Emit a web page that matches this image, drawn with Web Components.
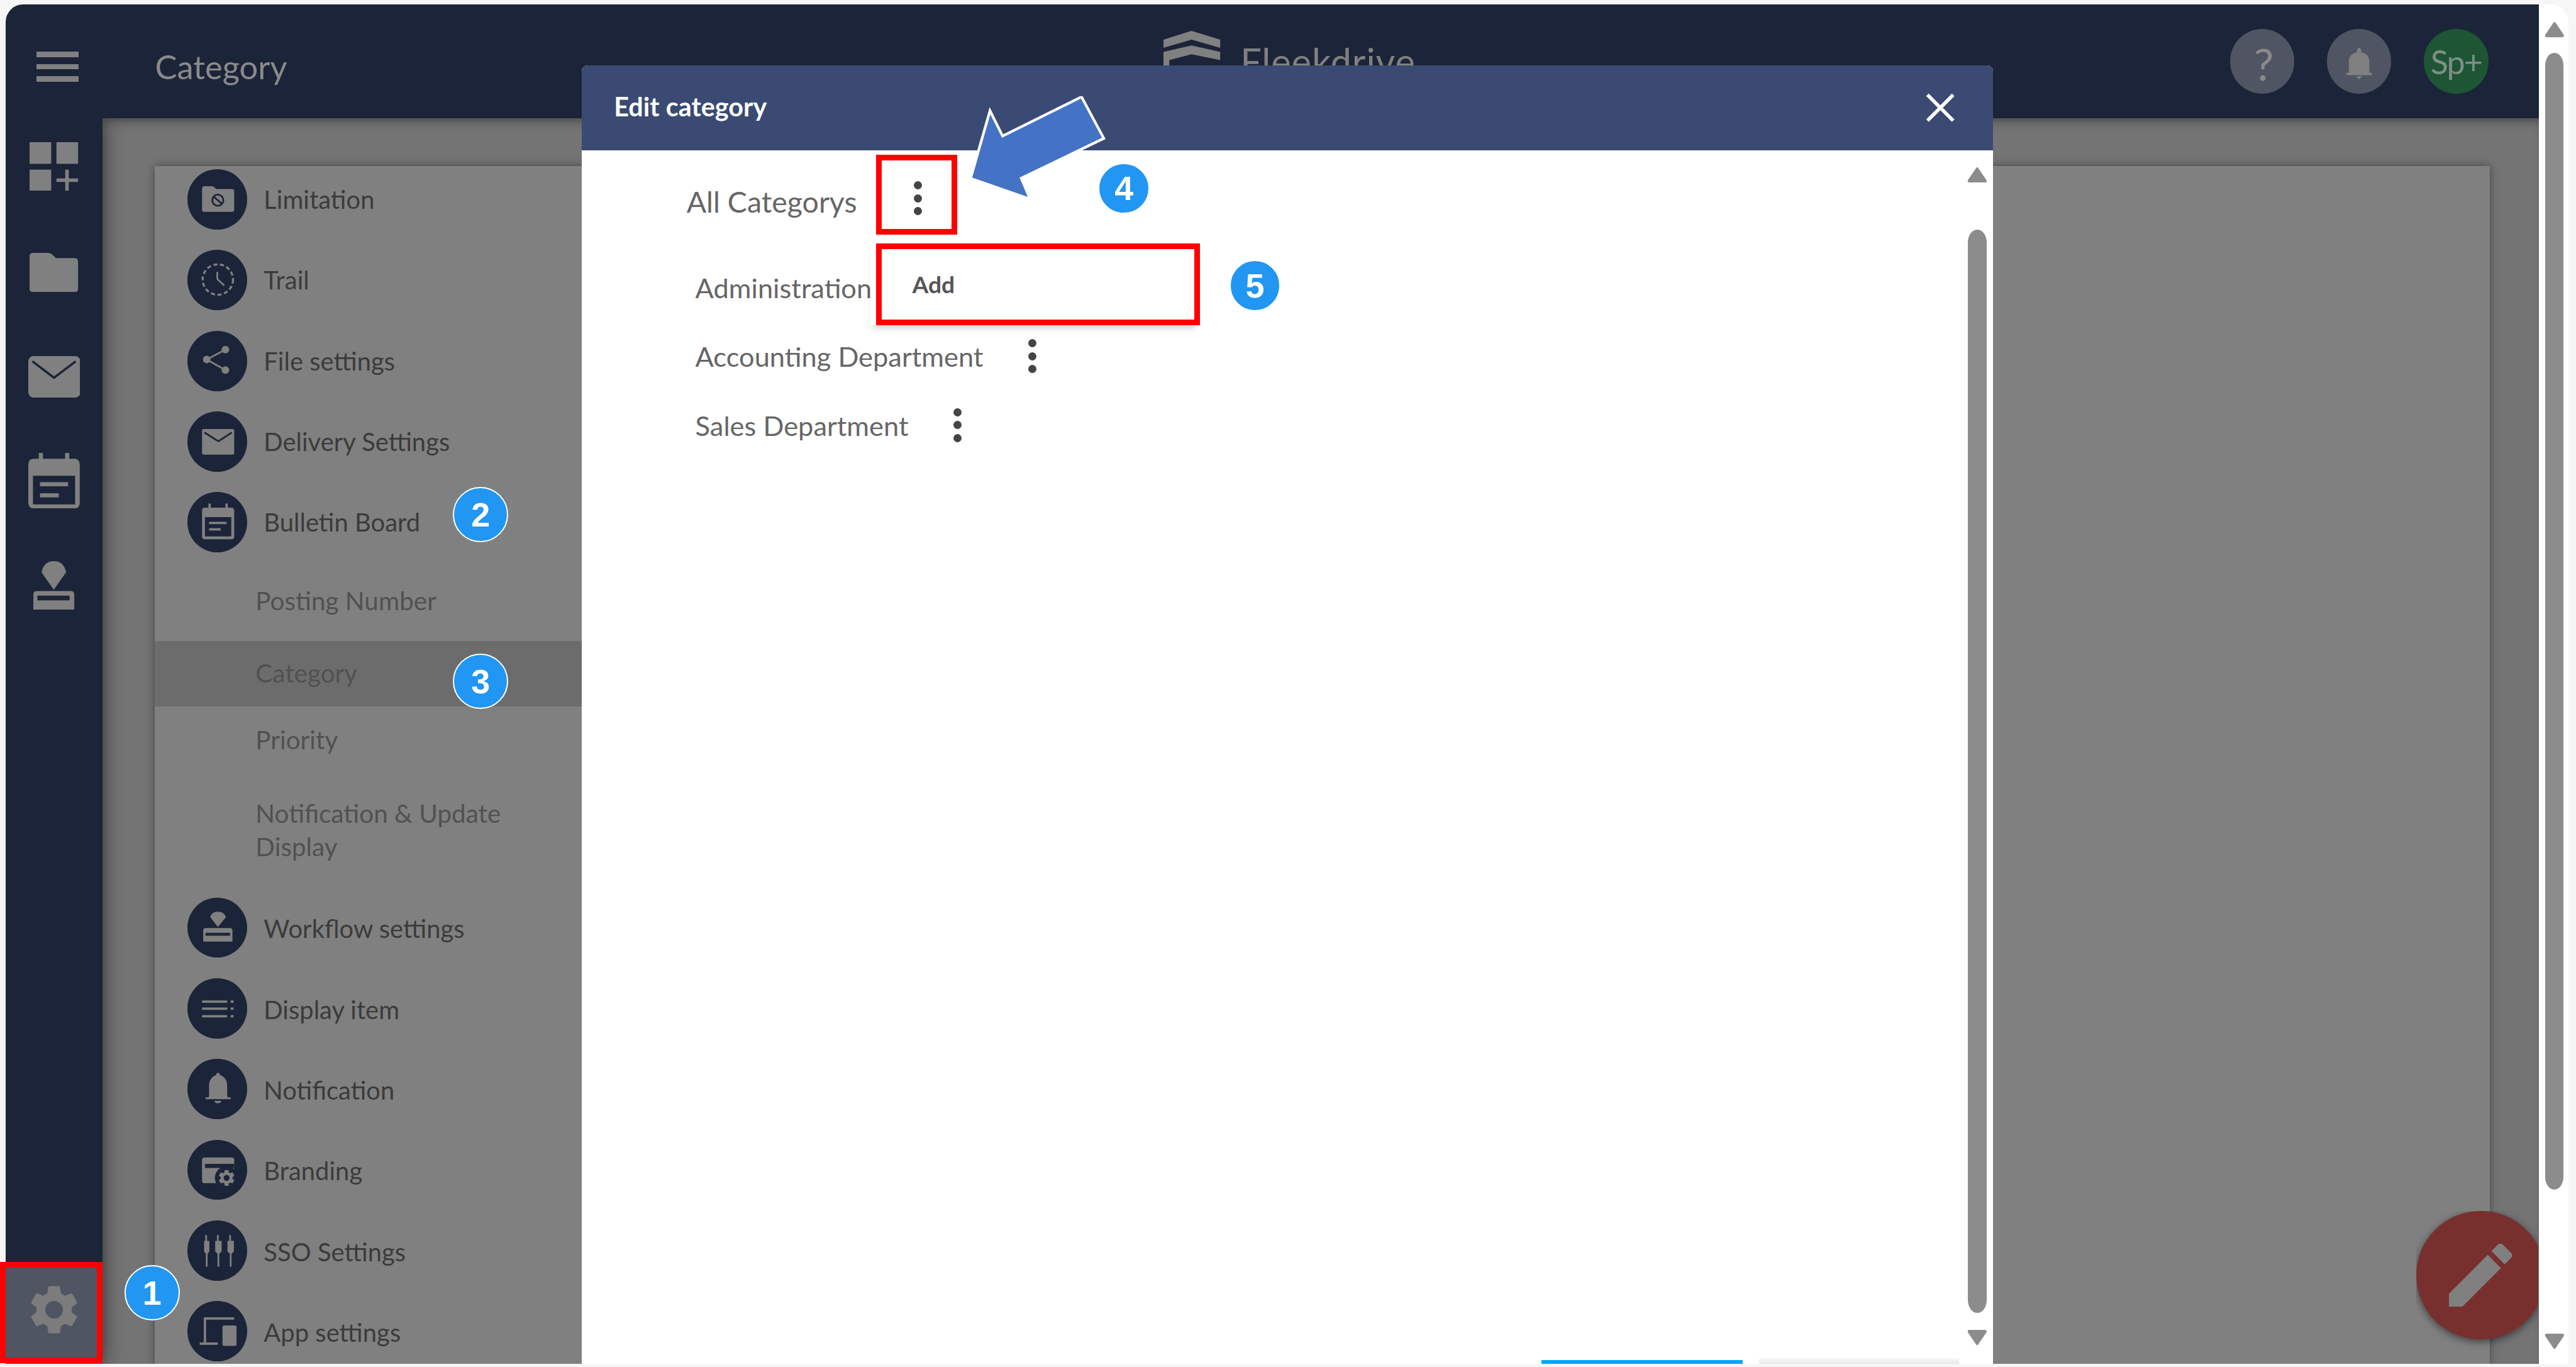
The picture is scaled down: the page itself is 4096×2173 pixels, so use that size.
<!DOCTYPE html>
<html lang="en">
<head>
<meta charset="utf-8">
<title>Category</title>
<style>
  html { overflow: hidden; background: #f6f6f6; }
  body { margin: 0; font-family: Lato, "Liberation Sans", sans-serif; }
</style>
</head>
<body>
<fd-app>
  <fd-topbar slot="top"></fd-topbar>
  <fd-rail slot="rail"></fd-rail>
  <fd-settings-menu slot="main">
    <fd-menu-item icon="limit">Limitation</fd-menu-item>
    <fd-menu-item icon="clock">Trail</fd-menu-item>
    <fd-menu-item icon="share">File settings</fd-menu-item>
    <fd-menu-item icon="mail">Delivery Settings</fd-menu-item>
    <fd-menu-item icon="board">Bulletin Board</fd-menu-item>
    <fd-sub-item h="134">Posting Number</fd-sub-item>
    <fd-sub-item h="112" selected>Category</fd-sub-item>
    <fd-sub-item h="116">Priority</fd-sub-item>
    <fd-sub-item h="193">Notification &amp; Update Display</fd-sub-item>
    <fd-menu-item icon="stamp" low>Workflow settings</fd-menu-item>
    <fd-menu-item icon="list" low>Display item</fd-menu-item>
    <fd-menu-item icon="bell" low>Notification</fd-menu-item>
    <fd-menu-item icon="brand" low>Branding</fd-menu-item>
    <fd-menu-item icon="sso" low>SSO Settings</fd-menu-item>
    <fd-menu-item icon="app" low>App settings</fd-menu-item>
  </fd-settings-menu>
  <fd-scrollbar slot="scroll" top="30" w="32" first="26" thumb="1944" last="246"></fd-scrollbar>

  <fd-edit-dialog>
    <fd-tree-row root>All Categorys</fd-tree-row>
    <fd-tree-row>Administration</fd-tree-row>
    <fd-tree-row>Accounting Department</fd-tree-row>
    <fd-tree-row>Sales Department</fd-tree-row>
  </fd-edit-dialog>
  <fd-fab></fd-fab>

  <fd-mark x="0" y="2157" w="175" h="173"></fd-mark>
  <fd-mark x="1498" y="265" w="139" h="136"></fd-mark>
  <fd-mark x="1498" y="416" w="554" h="140"></fd-mark>
  <fd-arrow x="1660" y="165"></fd-arrow>
  <fd-callout x="260" y="2210">1</fd-callout>
  <fd-callout x="822" y="880">2</fd-callout>
  <fd-callout x="822" y="1165">3</fd-callout>
  <fd-callout x="1922" y="322" small>4</fd-callout>
  <fd-callout x="2146" y="488" small>5</fd-callout>
</fd-app>

<script>
const GRAY = '#808080';
const NAVY = '#1b2438';

// sizes below are the reference's pixels; every "px" goes through this on its way to the page
const SCALE = 4096 / 4405;
const sized = markup => markup.replace(/(-?\d*\.?\d+)px/g, (m, n) => (n * SCALE).toFixed(2) + 'px');

const GEAR = 'M19.14 12.94c.04-.3.06-.61.06-.94 0-.32-.02-.64-.07-.94l2.03-1.58c.18-.14.23-.41.12-.61l-1.92-3.32c-.12-.22-.37-.29-.59-.22l-2.39.96c-.5-.38-1.03-.7-1.62-.94l-.36-2.54c-.04-.24-.24-.41-.48-.41h-3.84c-.24 0-.43.17-.47.41l-.36 2.54c-.59.24-1.13.57-1.62.94l-2.39-.96c-.22-.08-.47 0-.59.22L2.74 8.87c-.12.21-.08.47.12.61l2.03 1.58c-.05.3-.09.63-.09.94s.02.64.07.94l-2.03 1.58c-.18.14-.23.41-.12.61l1.92 3.32c.12.22.37.29.59.22l2.39-.96c.5.38 1.03.7 1.62.94l.36 2.54c.05.24.24.41.48.41h3.84c.24 0 .44-.17.47-.41l.36-2.54c.59-.24 1.13-.56 1.62-.94l2.39.96c.22.08.47 0 .59-.22l1.92-3.32c.12-.22.07-.47-.12-.61l-2.01-1.58zM12 15.6c-1.98 0-3.6-1.62-3.6-3.6s1.62-3.6 3.6-3.6 3.6 1.62 3.6 3.6-1.62 3.6-3.6 3.6z';

// menu icons, all drawn in a 103 x 103 box
const MENU_ICONS = {
  limit: `<path fill="${GRAY}" d="M25 33q0-4 4-4h13q2 0 4 2l3 3h27q4 0 4 4v31q0 4-4 4H29q-4 0-4-4z"/>
    <circle cx="52" cy="53" r="9.500" fill="none" stroke="${NAVY}" stroke-width="3"/>
    <path stroke="${NAVY}" stroke-width="3" d="M45 47l14 12"/>`,
  clock: `<circle cx="52" cy="51" r="26" fill="none" stroke="${GRAY}" stroke-width="3.5" stroke-dasharray="7 4.4"/>
    <path fill="none" stroke="${GRAY}" stroke-width="3" d="M51 38v10q0 2 2 4l10 9"/>`,
  share: `<g fill="${GRAY}"><circle cx="65" cy="32" r="6.5"/><circle cx="33" cy="49" r="6.5"/><circle cx="65" cy="67" r="6.5"/></g>
    <path fill="none" stroke="${GRAY}" stroke-width="3" d="M65 32L33 49l32 18"/>`,
  mail: `<rect x="25" y="30" width="55" height="44" rx="3" fill="${GRAY}"/>
    <path fill="none" stroke="${NAVY}" stroke-width="3" d="M29 36l24 15 23-15"/>`,
  board: `<path fill="${GRAY}" d="M36 20h4v7h25v-7h4v7h6q5 0 5 5v44q0 5-5 5H30q-5 0-5-5V32q0-5 5-5h6z"/>
    <rect x="30" y="43" width="45" height="33" fill="${NAVY}"/>
    <rect x="37" y="51" width="30" height="4" fill="${GRAY}"/><rect x="37" y="62" width="20" height="4" fill="${GRAY}"/>`,
  stamp: `<path fill="${GRAY}" d="M39 33q3-9 13-9t14 9L52 50z"/>
    <path fill="${GRAY}" d="M31 52h42q4 0 4 4v19H27V56q0-4 4-4z"/>
    <rect x="31" y="60" width="42" height="5" fill="${NAVY}"/>`,
  list: `<g fill="${GRAY}"><rect x="25" y="38" width="43" height="4"/><rect x="25" y="50" width="43" height="4"/><rect x="25" y="63" width="43" height="4"/>
    <rect x="74" y="38" width="5" height="4"/><rect x="74" y="50" width="5" height="4"/><rect x="74" y="63" width="5" height="4"/></g>`,
  bell: `<path fill="${GRAY}" d="M52 24q3 0 4 4c7 2 12 9 12 18v18q0 2 2 2h4v3H31v-3h4q2 0 2-2V46c0-9 5-16 12-18q1-4 3-4z"/>
    <path fill="${GRAY}" d="M46 72h12q-1 4-6 4t-6-4z"/>`,
  brand: `<path fill="${GRAY}" d="M29 30h47q4 0 4 4v36q0 4-4 4H29q-4 0-4-4V34q0-4 4-4z"/>
    <rect x="30" y="41" width="50" height="7" fill="${NAVY}"/>
    <circle cx="67" cy="65" r="20" fill="${NAVY}"/>
    <svg x="53" y="51" width="28" height="28" viewBox="2 2 20 20"><path fill="${GRAY}" d="${GEAR}"/></svg>`,
  sso: `<g fill="${GRAY}">
    <path d="M30.500 25h3v10h4v18l-3 4v22h-3V57l-3-4V35h2z"/>
    <path d="M50.500 25h3v10h5v18l-4 4v22h-3V57l-4-4V35h3z"/>
    <path d="M71.500 25h3v10h5v18l-4 4v22h-3V57l-4-4V35h3z"/></g>`,
  app: `<path fill="none" stroke="${GRAY}" stroke-width="4" d="M80 30H30v43M21 73h31"/>
    <rect x="60" y="42" width="24" height="35" rx="3" fill="${GRAY}"/>`
};

class FdApp extends HTMLElement {
  constructor() {
    super();
    this.attachShadow({ mode: 'open' });
    this.shadowRoot.innerHTML = sized(`
      <style>
        :host { display: block; position: relative; width: 4405px; height: 2336.900px; overflow: hidden; background: #f6f6f6; }
        .window {
          display: grid; grid-template-columns: 165px 1fr 51px; grid-template-rows: 194px 1fr;
          width: 4382px; height: 2324px; margin: 8px 0 0 10px;
          border-radius: 30px 30px 0 0; overflow: hidden; background: #fff;
        }
        .top { grid-column: 1 / 3; z-index: 2; display: flex; }
        .rail { z-index: 1; display: flex; }
        .main { min-width: 0; min-height: 0; display: flex; }
        .scroll { grid-column: 3; grid-row: 1 / 3; display: flex; justify-content: center; padding-left: 3px; }
      </style>
      <div class="window">
        <div class="top"><slot name="top"></slot></div>
        <div class="scroll"><slot name="scroll"></slot></div>
        <div class="rail"><slot name="rail"></slot></div>
        <div class="main"><slot name="main"></slot></div>
      </div>
      <slot></slot>`);
  }
}

class FdTopbar extends HTMLElement {
  constructor() {
    super();
    this.attachShadow({ mode: 'open' });
    this.shadowRoot.innerHTML = sized(`
      <style>
        :host { display: flex; flex: 1; align-items: center; min-width: 0; background: ${NAVY}; color: #8a8a8a; font-family: Lato, sans-serif; }
        .left { display: flex; align-items: center; width: 1980px; flex: none; padding-top: 18px; box-sizing: border-box; }
        .burger { display: flex; flex-direction: column; justify-content: space-between; width: 72px; height: 51px; margin-left: 52px; }
        .burger i { height: 9px; background: ${GRAY}; }
        .title { margin-left: 131px; font-size: 56.5px; line-height: 1; }
        .logo { display: flex; align-self: flex-start; margin-top: 45px; flex: none; }
        .logo span { font-size: 64px; line-height: 1; margin: 20px 0 0 34px; color: ${GRAY}; letter-spacing: 1px; }
        .tools { display: flex; gap: 56px; margin-left: auto; padding-right: 86px; }
        .tool { width: 110px; height: 110px; border-radius: 50%; display: flex; align-items: center; justify-content: center; background: #4f5562; font-size: 76px; }
        .tool span { position: relative; left: 3px; top: 3px; }
        .tool.user { background: #1d5535; font-size: 56px; color: #7f8f85; letter-spacing: -2px; }
      </style>
      <div class="left">
        <div class="burger"><i></i><i></i><i></i></div>
        <div class="title">Category</div>
      </div>
      <div class="logo">
        <svg width="97px" height="80px" viewBox="0 0 97 80"><path fill="${GRAY}" d="M0 15L48 0l49 15v14L48 15 0 29zM0 36l48-11 49 11v14L48 40l-38 10v30H0z"/></svg>
        <span>Fleekdrive</span>
      </div>
      <div class="tools">
        <div class="tool"><span>?</span></div>
        <div class="tool"><svg width="110px" height="110px" viewBox="0 0 110 110"><path fill="${GRAY}" d="M55 32q3 0 4 8c9 2 13.500 7 13.500 16v19H77v4H33v-4h4.500V56c0-9 4.500-14 13.500-16q1-8 4-8z"/><path fill="${GRAY}" d="M50 81h10l-5 5z"/></svg></div>
        <div class="tool user">Sp+</div>
      </div>`);
  }
}

class FdRail extends HTMLElement {
  constructor() {
    super();
    this.attachShadow({ mode: 'open' });
    this.shadowRoot.innerHTML = sized(`
      <style>
        :host { display: flex; flex-direction: column; flex: 1; background: ${NAVY}; box-shadow: 0 0 34px rgba(0,0,0,.55); }
        .items { display: flex; flex-direction: column; margin-top: -7px; }
        .item { height: 179px; display: flex; align-items: center; justify-content: center; }
        .item .down { margin-top: 4px; }
        .gear { margin-top: auto; height: 175px; background: #4f5562; display: flex; align-items: flex-start; justify-content: center; padding-top: 40px; box-sizing: border-box; }
      </style>
      <div class="items">
        <div class="item"><svg width="83px" height="83px" viewBox="0 0 83 83" fill="${GRAY}"><rect width="37" height="37"/><rect x="46" width="37" height="37"/><rect y="47" width="37" height="36"/><rect x="46" y="62" width="37" height="6"/><rect x="61" y="47" width="6" height="36"/></svg></div>
        <div class="item"><svg class="down" width="83px" height="67px" viewBox="0 0 83 67" fill="${GRAY}"><path d="M6 0h26q4 0 7 3l6 6h32q6 0 6 6v46q0 6-6 6H6q-6 0-6-6V6q0-6 6-6z"/></svg></div>
        <div class="item"><svg class="down" width="89px" height="71px" viewBox="0 0 89 71"><rect width="89" height="71" rx="9" fill="${GRAY}"/><path fill="none" stroke="${NAVY}" stroke-width="4" d="M7 9l37 28 37-28"/></svg></div>
        <div class="item"><svg width="88px" height="95px" viewBox="0 0 88 95"><path fill="${GRAY}" d="M18 0h7v10h38V0h7v10h8q10 0 10 10v65q0 10-10 10H10Q0 95 0 85V20q0-10 10-10h8z"/><rect x="8" y="39" width="72" height="49" fill="${NAVY}"/><rect x="20" y="50" width="48" height="7" fill="${GRAY}"/><rect x="20" y="69" width="32" height="7" fill="${GRAY}"/></svg></div>
        <div class="item"><svg width="70px" height="83px" viewBox="0 0 70 83"><path fill="${GRAY}" d="M14 19Q18 0 35 0t21 19L35 49z"/><path fill="${GRAY}" d="M6 51h58q6 0 6 6v26H0V57q0-6 6-6z"/><rect x="7" y="59" width="55" height="8" fill="${NAVY}"/></svg></div>
      </div>
      <div class="gear"><svg width="84px" height="84px" viewBox="2 2 20 20"><path fill="#7c7c7c" d="${GEAR}"/></svg></div>`);
  }
}

class FdSettingsMenu extends HTMLElement {
  constructor() {
    super();
    this.attachShadow({ mode: 'open' });
    this.shadowRoot.innerHTML = sized(`
      <style>
        :host { display: block; flex: 1; min-width: 0; background: #747474; padding: 82px 83px 0 90px; box-shadow: inset 0 14px 16px -8px rgba(0,0,0,.35); overflow: hidden; }
        .card { height: 100%; background: ${GRAY}; box-shadow: 0 0 14px rgba(0,0,0,.4); overflow: hidden; }
        .list { display: flex; flex-direction: column; margin-top: -12px; width: 735px; }
      </style>
      <div class="card"><div class="list"><slot></slot></div></div>`);
  }
}

class FdMenuItem extends HTMLElement {
  constructor() {
    super();
    this.attachShadow({ mode: 'open' });
  }
  connectedCallback() {
    this.shadowRoot.innerHTML = sized(`
      <style>
        :host { display: flex; align-items: center; height: 103px; margin: 17.5px 0; flex: none; padding-left: 55px; font-size: 43px; color: #3b3b3b; font-family: Lato, sans-serif; }
        .dot { width: 103px; height: 103px; border-radius: 50%; background: ${NAVY}; flex: none; margin-right: 28px; }
        svg { display: block; }
        .label { position: relative; }
        :host([low]) .label { top: 2px; }
      </style>
      <div class="dot"><svg width="103px" height="103px" viewBox="0 0 103 103">${MENU_ICONS[this.getAttribute('icon')]}</svg></div>
      <span class="label"><slot></slot></span>`);
  }
}

class FdSubItem extends HTMLElement {
  constructor() {
    super();
    this.attachShadow({ mode: 'open' });
  }
  connectedCallback() {
    const selected = this.hasAttribute('selected');
    this.shadowRoot.innerHTML = sized(`
      <style>
        :host { display: flex; align-items: center; flex: none; height: ${this.getAttribute('h')}px; padding: 0 100px 4px 172px; box-sizing: border-box; font-size: 43.500px; line-height: 57px; color: #515151; font-family: Lato, sans-serif; background: ${selected ? '#6c6c6c' : 'transparent'}; }
      </style>
      <slot></slot>`);
  }
}

class FdScrollbar extends HTMLElement {
  constructor() {
    super();
    this.attachShadow({ mode: 'open' });
  }
  connectedCallback() {
    const a = n => this.getAttribute(n);
    this.shadowRoot.innerHTML = sized(`
      <style>
        :host { display: flex; flex-direction: column; align-items: center; flex: none; width: ${a('w')}px; padding-top: ${a('top')}px; }
        svg { display: block; flex: none; }
        .thumb { flex: none; width: 100%; height: ${a('thumb')}px; margin: ${a('first')}px 0 ${a('last')}px; background: #8c8c8c; border-radius: 16px 16px 16px 16px / 22px 22px 22px 22px; }
      </style>
      <svg width="34px" height="26px" viewBox="0 0 34 26"><path fill="#8c8c8c" d="M17 0q2 0 3 3l13 19q1 4-3 4H4q-4 0-3-4L14 3q1-3 3-3z"/></svg>
      <div class="thumb"></div>
      <svg width="34px" height="26px" viewBox="0 0 34 26"><path fill="#8c8c8c" d="M17 26q2 0 3-3l13-19q1-4-3-4H4Q0 0 1 4l13 19q1 3 3 3z"/></svg>`);
  }
}

class FdEditDialog extends HTMLElement {
  constructor() {
    super();
    this.attachShadow({ mode: 'open' });
    this.shadowRoot.innerHTML = sized(`
      <style>
        :host { position: absolute; left: 995px; top: 112px; width: 2413px; height: 2220px; display: flex; flex-direction: column; background: #fff; border-radius: 10px 10px 0 0; overflow: hidden; font-family: Lato, sans-serif; z-index: 3; }
        header { flex: none; display: flex; align-items: center; justify-content: space-between; height: 145px; padding: 0 65px 0 55px; box-sizing: border-box; background: #3a4a72; color: #fff; font-size: 44.500px; font-weight: 700; }
        header span { position: relative; top: -3px; }
        .body { flex: 1; display: flex; min-height: 0; position: relative; }
        .tree { flex: 1; padding-top: 28px; display: flex; flex-direction: column; }
        .side { flex: none; padding-right: 11px; }
        .popup { position: absolute; left: 493px; top: 159px; width: 560px; height: 140px; background: #fff; box-shadow: 0 8px 10px -3px rgba(0,0,0,.16); display: flex; align-items: center; padding-left: 72px; box-sizing: border-box; font-size: 40px; font-weight: 700; color: #555; }
        .btn { position: absolute; bottom: 0; height: 7px; }
        .ok { left: 1641px; width: 344px; background: #00a8f3; }
        .cancel { left: 2013px; width: 342px; height: 10px; background: linear-gradient(#f8f8f8, #e8e8e8); }
      </style>
      <header>
        <span>Edit category</span>
        <svg width="50px" height="50px" viewBox="0 0 50 50"><path fill="none" stroke="#fff" stroke-width="6" d="M3 3l44 44M47 3L3 47"/></svg>
      </header>
      <div class="body">
        <div class="tree"><slot></slot></div>
        <div class="side"><fd-scrollbar top="29" w="32" first="81" thumb="1852" last="28"></fd-scrollbar></div>
        <div class="popup">Add</div>
        <div class="btn ok"></div>
        <div class="btn cancel"></div>
      </div>`);
  }
}

class FdTreeRow extends HTMLElement {
  constructor() {
    super();
    this.attachShadow({ mode: 'open' });
  }
  connectedCallback() {
    const root = this.hasAttribute('root');
    this.shadowRoot.innerHTML = sized(`
      <style>
        :host { display: flex; align-items: center; flex: none; height: 118px; padding-left: ${root ? 179 : 194}px; margin-bottom: ${root ? 29 : 0}px; font-size: ${root ? 50 : 46.7}px; color: #666; font-family: Lato, sans-serif; }
        .more { display: flex; flex-direction: column; gap: 8px; margin: ${root ? -10 : 0}px 0 0 ${root ? 97 : 77}px; }
        .more i { width: 14px; height: 14px; border-radius: 50%; background: #444; }
      </style>
      <slot></slot>
      <div class="more"><i></i><i></i><i></i></div>`);
  }
}

class FdFab extends HTMLElement {
  constructor() {
    super();
    this.attachShadow({ mode: 'open' });
    this.shadowRoot.innerHTML = sized(`
      <style>
        :host { position: absolute; left: 4132px; top: 2070px; width: 209px; height: 240px; overflow: hidden; z-index: 2; }
        .fab { width: 220px; height: 220px; border-radius: 50%; background: #78302e; box-shadow: 0 4px 14px rgba(0,0,0,.5); display: flex; align-items: center; justify-content: center; }
      </style>
      <div class="fab"><svg width="108px" height="108px" viewBox="3 3 18 18"><path fill="${GRAY}" d="M3 17.25V21h3.75L17.81 9.94l-3.750-3.750L3 17.250zM20.710 7.040c.39-.39.39-1.020 0-1.410l-2.340-2.340c-.39-.39-1.020-.39-1.410 0l-1.830 1.830 3.750 3.750 1.830-1.830z"/></svg></div>`);
  }
}

class FdMark extends HTMLElement {
  constructor() {
    super();
    this.attachShadow({ mode: 'open' });
  }
  connectedCallback() {
    const a = n => this.getAttribute(n);
    this.shadowRoot.innerHTML = sized(`<style>:host { position: absolute; left: ${a('x')}px; top: ${a('y')}px; width: ${a('w')}px; height: ${a('h')}px; box-sizing: border-box; border: 10px solid #f00; z-index: 4; }</style>`);
  }
}

class FdArrow extends HTMLElement {
  constructor() {
    super();
    this.attachShadow({ mode: 'open' });
  }
  connectedCallback() {
    this.shadowRoot.innerHTML = sized(`
      <style>:host { position: absolute; left: ${this.getAttribute('x')}px; top: ${this.getAttribute('y')}px; z-index: 4; display: block; line-height: 0; }</style>
      <svg width="232px" height="180px" viewBox="0 0 232 180"><path fill="#4472c4" stroke="#fff" stroke-width="9" paint-order="stroke" d="M2 139L33 31l20 40L188 4l36 67L83 139l14 33z"/></svg>`);
  }
}

class FdCallout extends HTMLElement {
  constructor() {
    super();
    this.attachShadow({ mode: 'open' });
  }
  connectedCallback() {
    const d = this.hasAttribute('small') ? 88 : 95;
    this.shadowRoot.innerHTML = sized(`
      <style>
        :host { position: absolute; left: ${this.getAttribute('x') - d / 2}px; top: ${this.getAttribute('y') - d / 2}px; z-index: 5; display: flex; align-items: center; justify-content: center; width: ${d}px; height: ${d}px; box-sizing: border-box; border-radius: 50%; background: #2196f3; border: 3px solid #fff; color: #fff; font: 700 58px "Liberation Sans", sans-serif; }
      </style>
      <slot></slot>`);
  }
}

customElements.define('fd-app', FdApp);
customElements.define('fd-topbar', FdTopbar);
customElements.define('fd-rail', FdRail);
customElements.define('fd-settings-menu', FdSettingsMenu);
customElements.define('fd-menu-item', FdMenuItem);
customElements.define('fd-sub-item', FdSubItem);
customElements.define('fd-scrollbar', FdScrollbar);
customElements.define('fd-edit-dialog', FdEditDialog);
customElements.define('fd-tree-row', FdTreeRow);
customElements.define('fd-fab', FdFab);
customElements.define('fd-mark', FdMark);
customElements.define('fd-arrow', FdArrow);
customElements.define('fd-callout', FdCallout);
</script>
</body>
</html>
